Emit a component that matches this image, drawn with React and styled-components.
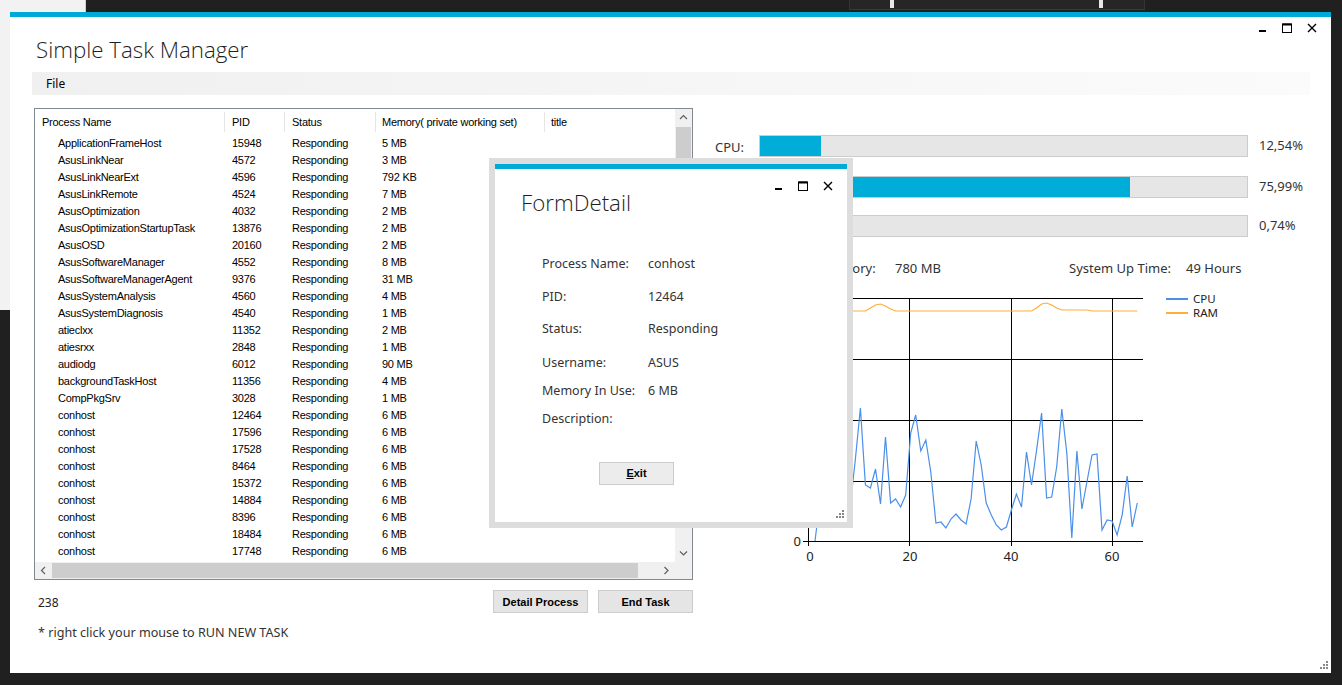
import React from "react";
import styled, { createGlobalStyle } from "styled-components";

const GlobalStyle = createGlobalStyle`
  html, body {
    margin: 0;
    padding: 0;
    background: #202020;
    width: 1342px;
    height: 685px;
    overflow: hidden;
    font-family: "Noto Sans", "Open Sans", sans-serif;
  }
`;

const Desktop = styled.div`
  position: relative;
  width: 1342px;
  height: 685px;
  background: #202020;
`;

const BackWindow = styled.div`
  position: absolute;
  left: 0;
  top: 0;
  width: 85px;
  height: 310px;
  background: #f2f2f2;
  border-right: 1px solid #cfcfcf;
`;

const Ruler = styled.div`
  position: absolute;
  left: 849px;
  top: 0;
  width: 294px;
  height: 9px;
  background: #262626;
  border-bottom: 1px solid #3a3a3a;
  border-left: 1px solid #333;
  border-right: 1px solid #333;
`;

const Marker = styled.div`
  position: absolute;
  top: 0;
  left: ${p => p.$x}px;
  width: 4px;
  height: 8px;
  background: #e8e8e8;
`;

const Window = styled.div`
  position: absolute;
  left: 10px;
  top: 12px;
  width: 1321px;
  height: 661px;
  background: #fff;
  border-top: 5px solid #00aad8;
  box-sizing: border-box;
  display: flex;
  flex-direction: column;
`;

const TitleBar = styled.div`
  height: 55px;
  display: flex;
  justify-content: space-between;
  align-items: flex-start;
  padding: 0 14px 0 26px;
`;

const Title = styled.div`
  font-family: "Open Sans", sans-serif;
  font-weight: 300;
  font-size: 22.3px;
  line-height: 32px;
  color: #1e1e1e;
  margin-top: 17px;
`;

const Controls = styled.div`
  display: flex;
  gap: 14px;
  margin-top: 6px;
`;

const MenuBar = styled.div`
  margin: 0 21px 0 22px;
  height: 23px;
  background: linear-gradient(to right, #f0f0f0, #fbfbfb);
  display: flex;
  align-items: center;
  padding-left: 14px;
  font-size: 12px;
  color: #000;
`;

const Body = styled.div`
  display: flex;
  margin-top: 13px;
  padding-left: 24px;
`;

const LeftCol = styled.div`
  width: 659px;
  display: flex;
  flex-direction: column;
`;

const ListBox = styled.div`
  height: 472px;
  border: 1px solid #828790;
  box-sizing: border-box;
  display: grid;
  grid-template-columns: 1fr 17px;
  grid-template-rows: 1fr 17px;
  font-family: "Liberation Sans", Arial, sans-serif;
  font-size: 11px;
  letter-spacing: -0.25px;
  color: #000;
  overflow: hidden;
`;

const ListContent = styled.div`
  overflow: hidden;
`;

const cols = "190px 60px 91px 169px 1fr";

const HeaderRow = styled.div`
  display: grid;
  grid-template-columns: ${cols};
  height: 26px;
  align-items: center;
`;

const HeaderCell = styled.div`
  padding-left: ${p => p.$pad || 7}px;
  height: 20px;
  line-height: 20px;
  border-right: ${p => (p.$last ? "none" : "1px solid #e5e5e5")};
`;

const Row = styled.div`
  display: grid;
  grid-template-columns: ${cols};
  height: 17px;
  line-height: 17px;
  white-space: nowrap;
`;

const Cell = styled.div`
  padding-left: ${p => p.$pad || 7}px;
  overflow: hidden;
`;

const VScroll = styled.div`
  background: #f0f0f0;
  display: flex;
  flex-direction: column;
  align-items: center;
`;

const HScroll = styled.div`
  background: #f0f0f0;
  display: flex;
  align-items: center;
`;

const Corner = styled.div`
  background: #f0f0f0;
`;

const Arrow = styled.div`
  width: 17px;
  height: 17px;
  display: flex;
  align-items: center;
  justify-content: center;
  flex-shrink: 0;
`;

const VThumb = styled.div`
  width: 15px;
  height: 80px;
  background: #cdcdcd;
  margin-top: 1px;
`;

const HThumb = styled.div`
  height: 15px;
  background: #cdcdcd;
  flex: 1;
  margin-right: 20px;
`;

const Footer = styled.div`
  display: flex;
  align-items: center;
  margin-top: 10px;
  height: 23px;
`;

const Count = styled.div`
  flex: 1;
  font-size: 12px;
  color: #222;
  padding-left: 4px;
  padding-top: 2px;
`;

const Button = styled.button`
  width: ${p => p.$w || 95}px;
  height: 23px;
  margin-left: ${p => p.$ml || 0}px;
  background: ${p => p.$bg || "#e5e5e5"};
  border: 1px solid #cccccc;
  font-family: "Liberation Sans", Arial, sans-serif;
  font-weight: bold;
  font-size: 11px;
  color: #000;
  padding: 0;
  u { text-decoration: underline; }
`;

const Hint = styled.div`
  margin-top: 11px;
  padding-left: 4px;
  font-size: 12.6px;
  color: #333;
`;

const RightCol = styled.div`
  margin-left: 22px;
  padding-top: 27px;
  display: flex;
  flex-direction: column;
`;

const Meter = styled.div`
  display: grid;
  grid-template-columns: 44px 489px auto;
  align-items: center;
  margin-bottom: ${p => p.$mb || 18}px;
  font-size: 13px;
  line-height: 16px;
  color: #333;
`;

const MeterLabel = styled.div`
  margin-top: 2px;
`;

const Bar = styled.div`
  height: 22px;
  background: #e6e6e6;
  border: 1px solid #cccccc;
  box-sizing: border-box;
`;

const Fill = styled.div`
  height: 100%;
  background: #00acd8;
`;

const Pct = styled.div`
  padding-left: 11px;
  margin-top: -2px;
`;

const Stats = styled.div`
  display: flex;
  margin-top: 5px;
  padding-left: 106px;
  font-size: 13px;
  color: #333;
  line-height: 18px;
`;

const StatText = styled.div`
  width: ${p => (p.$w ? `${p.$w}px` : "auto")};
`;

const ChartSvg = styled.svg`
  display: block;
  margin-left: 55px;
  margin-top: 11px;
`;

const Dialog = styled.div`
  position: absolute;
  left: 489px;
  top: 158px;
  width: 364px;
  height: 370px;
  background: #dddddd;
  padding: 6px;
  box-sizing: border-box;
`;

const DialogInner = styled.div`
  position: relative;
  height: 100%;
  background: #fff;
  border-top: 5px solid #00aad8;
  box-sizing: border-box;
  display: flex;
  flex-direction: column;
`;

const DialogBar = styled.div`
  display: flex;
  justify-content: flex-end;
  padding: 6px 14px 0 0;
  height: 10px;
`;

const DialogTitle = styled(Title)`
  margin-top: 2px;
  padding-left: 26px;
`;

const DetailList = styled.div`
  padding-left: 47px;
  margin-top: 36px;
  font-size: 12.5px;
  color: #333;
`;

const DetailRow = styled.div`
  display: grid;
  grid-template-columns: 106px 1fr;
  height: 18px;
  line-height: 18px;
  margin-top: ${p => p.$mt || 0}px;
`;

const ExitRow = styled.div`
  padding-left: 104px;
  margin-top: 32px;
`;

const Grip = styled.svg`
  position: absolute;
  right: 2px;
  bottom: 2px;
`;

const ctrl = { stroke: "#000", fill: "none" };

const WinControls = () => (
  <Controls>
    <svg width="10" height="10" viewBox="0 0 10 10">
      <rect x="1" y="7" width="7" height="2" fill="#000" />
    </svg>
    <svg width="11" height="10" viewBox="0 0 11 10">
      <rect x="0.5" y="1" width="9" height="8.5" {...ctrl} strokeWidth="1" />
      <rect x="0.5" y="0.5" width="9" height="2" fill="#000" />
    </svg>
    <svg width="10" height="10" viewBox="0 0 10 10">
      <path d="M1 1 L9 9 M9 1 L1 9" {...ctrl} strokeWidth="1.4" />
    </svg>
  </Controls>
);

const GripDots = () => (
  <Grip width="10" height="10" viewBox="0 0 10 10">
    {[[7, 0], [4, 3], [7, 3], [1, 6], [4, 6], [7, 6]].map(([x, y], i) => (
      <rect key={i} x={x} y={y} width="2" height="2" fill="#888" />
    ))}
  </Grip>
);

const processes = [
  ["ApplicationFrameHost", 15948, "5 MB"],
  ["AsusLinkNear", 4572, "3 MB"],
  ["AsusLinkNearExt", 4596, "792 KB"],
  ["AsusLinkRemote", 4524, "7 MB"],
  ["AsusOptimization", 4032, "2 MB"],
  ["AsusOptimizationStartupTask", 13876, "2 MB"],
  ["AsusOSD", 20160, "2 MB"],
  ["AsusSoftwareManager", 4552, "8 MB"],
  ["AsusSoftwareManagerAgent", 9376, "31 MB"],
  ["AsusSystemAnalysis", 4560, "4 MB"],
  ["AsusSystemDiagnosis", 4540, "1 MB"],
  ["atieclxx", 11352, "2 MB"],
  ["atiesrxx", 2848, "1 MB"],
  ["audiodg", 6012, "90 MB"],
  ["backgroundTaskHost", 11356, "4 MB"],
  ["CompPkgSrv", 3028, "1 MB"],
  ["conhost", 12464, "6 MB"],
  ["conhost", 17596, "6 MB"],
  ["conhost", 17528, "6 MB"],
  ["conhost", 8464, "6 MB"],
  ["conhost", 15372, "6 MB"],
  ["conhost", 14884, "6 MB"],
  ["conhost", 8396, "6 MB"],
  ["conhost", 18484, "6 MB"],
  ["conhost", 17748, "6 MB"],
];

const meters = [
  ["CPU:", 12.54, "12,54%"],
  ["RAM:", 75.99, "75,99%"],
  ["Disk:", 0.74, "0,74%"],
];

// chart values in screen px (absolute y), index 1..65
const cpu = [541, 500, 470, 440, 490, 455, 470, 505, 460, 408, 485, 488, 469, 504, 437, 503, 499, 507, 495, 433, 415, 451, 440, 472, 523, 522, 528, 519, 514, 520, 524, 499, 441, 465, 503, 515, 525, 530, 527, 510, 494, 507, 452, 485, 450, 413, 498, 497, 467, 409, 453, 538, 451, 509, 482, 455, 454, 530, 520, 521, 535, 515, 476, 527, 503];
const ram = cpu.map((_, k) => {
  const i = k + 1;
  const bumps = { 12: 308, 13: 305, 14: 304, 15: 306, 16: 309, 45: 308, 46: 304, 47: 303, 48: 305, 49: 308 };
  if (bumps[i]) return bumps[i];
  if (i > 49 && i < 56) return 310;
  return 311;
});

const OX = 770;
const OY = 288;
const px = i => 810 + 5.035 * i - OX;
const toPts = arr => arr.map((y, k) => `${px(k + 1).toFixed(1)},${y - OY}`).join(" ");

const Chart = () => {
  const gy = [298, 359, 420, 481];
  const gx = [909, 1011, 1112];
  return (
    <ChartSvg width="480" height="280" viewBox="0 0 480 280">
      {gy.map(y => (
        <line key={y} x1={803 - OX} x2={1143 - OX} y1={y - OY + 0.5} y2={y - OY + 0.5} stroke="#000" />
      ))}
      {gx.map(x => (
        <line key={x} x1={x - OX + 0.5} x2={x - OX + 0.5} y1={298 - OY} y2={546 - OY} stroke="#000" />
      ))}
      <line x1={808 - OX + 0.5} x2={808 - OX + 0.5} y1={298 - OY} y2={546 - OY} stroke="#000" />
      <line x1={803 - OX} x2={1143 - OX} y1={541 - OY + 0.5} y2={541 - OY + 0.5} stroke="#000" />
      <polyline points={toPts(ram)} fill="none" stroke="#ffae3a" strokeWidth="1.2" />
      <polyline points={toPts(cpu)} fill="none" stroke="#4a8fe8" strokeWidth="1.2" />
      <g fontFamily="Noto Sans, sans-serif" fontSize="13" fill="#222">
        <text x={801 - OX} y={546 - OY} textAnchor="end">0</text>
        <text x={801 - OX} y={485 - OY} textAnchor="end">25</text>
        <text x={801 - OX} y={424 - OY} textAnchor="end">50</text>
        <text x={801 - OX} y={363 - OY} textAnchor="end">75</text>
        <text x={801 - OX} y={302 - OY} textAnchor="end">100</text>
        {[[810, "0"], [910, "20"], [1011, "40"], [1112, "60"]].map(([x, t]) => (
          <text key={t} x={x - OX} y={561 - OY} textAnchor="middle">{t}</text>
        ))}
      </g>
      <g fontFamily="Noto Sans, sans-serif" fontSize="11.5" fill="#222">
        <line x1={1166 - OX} x2={1188 - OX} y1={299 - OY} y2={299 - OY} stroke="#4a8fe8" strokeWidth="2" />
        <text x={1193 - OX} y={303 - OY}>CPU</text>
        <line x1={1166 - OX} x2={1188 - OX} y1={313 - OY} y2={313 - OY} stroke="#ffae3a" strokeWidth="2" />
        <text x={1193 - OX} y={317 - OY}>RAM</text>
      </g>
    </ChartSvg>
  );
};

const Chevron = ({ dir }) => {
  const d = {
    up: "M1 5 L4.5 1.5 L8 5",
    down: "M1 1.5 L4.5 5 L8 1.5",
    left: "M5 1 L1.5 4.5 L5 8",
    right: "M1.5 1 L5 4.5 L1.5 8",
  }[dir];
  const vertical = dir === "up" || dir === "down";
  return (
    <svg width={vertical ? 9 : 7} height={vertical ? 7 : 9} viewBox={vertical ? "0 0 9 7" : "0 0 7 9"}>
      <path d={d} fill="none" stroke="#606060" strokeWidth="1.2" />
    </svg>
  );
};

const App = () => (
  <Desktop>
    <GlobalStyle />
    <BackWindow />
    <Ruler>
      <Marker $x={40} />
      <Marker $x={249} />
    </Ruler>
    <Window>
      <TitleBar>
        <Title>Simple Task Manager</Title>
        <WinControls />
      </TitleBar>
      <MenuBar>File</MenuBar>
      <Body>
        <LeftCol>
          <ListBox>
            <ListContent>
              <HeaderRow>
                <HeaderCell>Process Name</HeaderCell>
                <HeaderCell>PID</HeaderCell>
                <HeaderCell>Status</HeaderCell>
                <HeaderCell $pad={6}>Memory( private working set)</HeaderCell>
                <HeaderCell $pad={6} $last>title</HeaderCell>
              </HeaderRow>
              {processes.map(([name, pid, mem], i) => (
                <Row key={i}>
                  <Cell $pad={23}>{name}</Cell>
                  <Cell>{pid}</Cell>
                  <Cell>Responding</Cell>
                  <Cell $pad={6}>{mem}</Cell>
                  <Cell />
                </Row>
              ))}
            </ListContent>
            <VScroll>
              <Arrow><Chevron dir="up" /></Arrow>
              <VThumb />
              <div style={{ flex: 1 }} />
              <Arrow><Chevron dir="down" /></Arrow>
            </VScroll>
            <HScroll>
              <Arrow><Chevron dir="left" /></Arrow>
              <HThumb />
              <Arrow><Chevron dir="right" /></Arrow>
            </HScroll>
            <Corner />
          </ListBox>
          <Footer>
            <Count>238</Count>
            <Button>Detail Process</Button>
            <Button $ml={10}>End Task</Button>
          </Footer>
          <Hint>* right click your mouse to RUN NEW TASK</Hint>
        </LeftCol>
        <RightCol>
          {meters.map(([label, v, text], i) => (
            <Meter key={label} $mb={i === 0 ? 19 : 17}>
              <MeterLabel>{label}</MeterLabel>
              <Bar><Fill style={{ width: `${v}%` }} /></Bar>
              <Pct>{text}</Pct>
            </Meter>
          ))}
          <Stats>
            <StatText $w={74}>Memory:</StatText>
            <StatText $w={174}>780 MB</StatText>
            <StatText $w={117}>System Up Time:</StatText>
            <StatText>49 Hours</StatText>
          </Stats>
          <Chart />
        </RightCol>
      </Body>
      <GripDots />
    </Window>
    <Dialog>
      <DialogInner>
        <DialogBar><WinControls /></DialogBar>
        <DialogTitle>FormDetail</DialogTitle>
        <DetailList>
          <DetailRow><span>Process Name:</span><span>conhost</span></DetailRow>
          <DetailRow $mt={15}><span>PID:</span><span>12464</span></DetailRow>
          <DetailRow $mt={14}><span>Status:</span><span>Responding</span></DetailRow>
          <DetailRow $mt={16}><span>Username:</span><span>ASUS</span></DetailRow>
          <DetailRow $mt={10}><span>Memory In Use:</span><span>6 MB</span></DetailRow>
          <DetailRow $mt={10}><span>Description:</span><span /></DetailRow>
        </DetailList>
        <ExitRow>
          <Button $w={75} $bg="#ececec"><u>E</u>xit</Button>
        </ExitRow>
        <GripDots />
      </DialogInner>
    </Dialog>
  </Desktop>
);

export default App;
